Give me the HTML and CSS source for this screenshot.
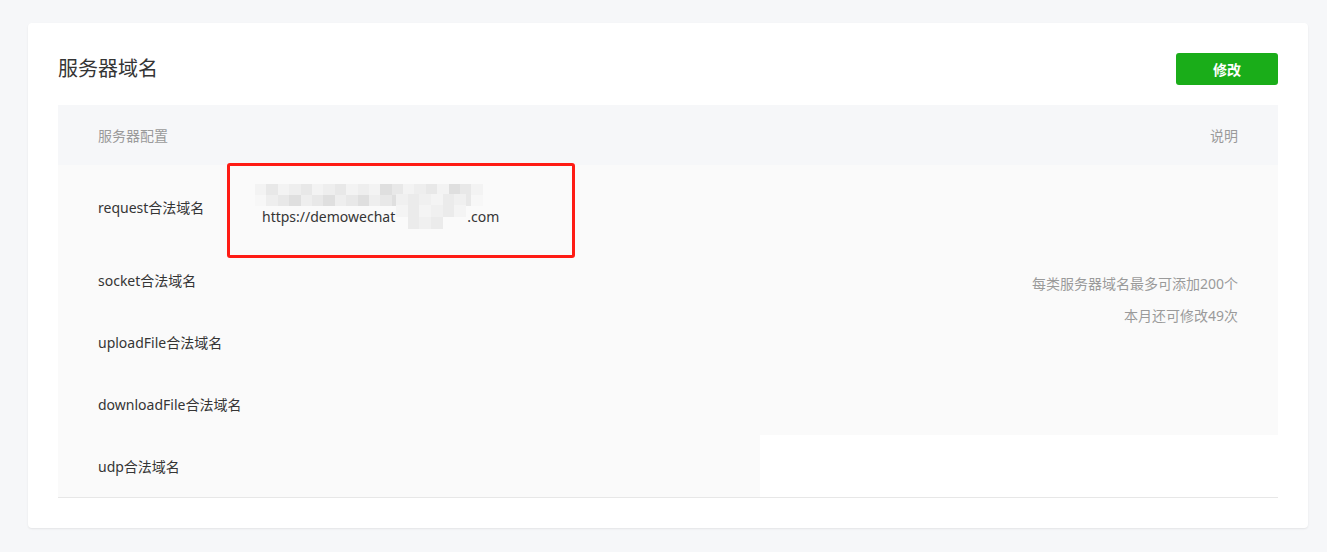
FILE: index.html
```html
<!DOCTYPE html>
<html lang="zh-CN">
<head>
<meta charset="utf-8">
<title>服务器域名</title>
<link rel="stylesheet" href="styles.css">
</head>
<body>
<div class="page">
  <section class="card">
    <div class="card-head">
      <h2 class="title">服务器域名</h2>
      <button class="btn-primary">修改</button>
    </div>
    <div class="table-wrap">
      <table class="domain-table">
        <thead>
          <tr>
            <th class="col-label">服务器配置</th>
            <th class="col-value"></th>
            <th class="col-desc">说明</th>
          </tr>
        </thead>
        <tbody>
          <tr class="row-tall">
            <td class="col-label">request合法域名</td>
            <td class="col-value">
              <div class="value-line">
                <div class="mosaic">
                  <i class="m1"></i><i class="m2"></i><i class="m1"></i><i class="m3"></i><i class="m2"></i><i class="m1"></i><i class="m3"></i><i class="m2"></i><i class="m1"></i><i class="m3"></i><i class="m1"></i><i class="m4"></i><i class="m2"></i><i class="m1"></i><i class="m3"></i><i class="m2"></i><i class="m1"></i><i class="m4"></i><i class="m2"></i><i class="m1"></i>
                  <i class="m5"></i><i class="m3"></i><i class="m2"></i><i class="m4"></i><i class="m3"></i><i class="m2"></i><i class="m4"></i><i class="m3"></i><i class="m2"></i><i class="m4"></i><i class="m3"></i><i class="m2"></i><i class="m4"></i><i class="m2"></i><i class="m3"></i><i class="m1"></i><i class="m2"></i><i class="m3"></i><i class="m2"></i><i class="m5"></i>
                </div>
              </div>
              <div class="value-line url-line">https://demowechat<span class="hidden-part">xxxxxxxxx</span>.com
                <div class="mosaic-over">
                  <i class="w1"></i><i class="w2"></i><i class="w1"></i><i class="w3"></i><i class="w2"></i><i class="w1"></i>
                  <i class="w3"></i><i class="w2"></i><i class="w3"></i><i class="w1"></i><i class="w2"></i><i class="w3"></i>
                  <i class="w5"></i><i class="w2"></i><i class="w1"></i><i class="w2"></i><i class="w5"></i><i class="w5"></i>
                </div>
              </div>
              <div class="highlight-box"></div>
            </td>
            <td class="col-desc" rowspan="4">
              <p class="desc-line">每类服务器域名最多可添加200个</p>
              <p class="desc-line">本月还可修改49次</p>
            </td>
          </tr>
          <tr>
            <td class="col-label">socket合法域名</td>
            <td class="col-value"></td>
          </tr>
          <tr>
            <td class="col-label">uploadFile合法域名</td>
            <td class="col-value"></td>
          </tr>
          <tr>
            <td class="col-label">downloadFile合法域名</td>
            <td class="col-value"></td>
          </tr>
          <tr>
            <td class="col-label">udp合法域名</td>
            <td class="col-value"></td>
          </tr>
        </tbody>
      </table>
    </div>
  </section>
</div>
</body>
</html>
```

FILE: styles.css
```css
* { box-sizing: border-box; }

html, body {
  margin: 0;
  padding: 0;
  background: #f6f7f9;
  font-family: "Noto Sans", "Noto Sans CJK SC", sans-serif;
  color: #353535;
  font-size: 14px;
}

.page {
  padding: 23px 19px 24px 28px;
}

.card {
  background: #fff;
  border-radius: 4px;
  box-shadow: 0 1px 2px rgba(0, 0, 0, 0.08);
  padding: 30px;
}

.card-head {
  display: flex;
  align-items: center;
  justify-content: space-between;
  height: 32px;
  margin-bottom: 20px;
}

.title {
  margin: 0;
  font-size: 20px;
  font-weight: 400;
  line-height: 32px;
  color: #353535;
}

.btn-primary {
  width: 102px;
  height: 32px;
  border: 0;
  border-radius: 3px;
  background: #1aad19;
  color: #fff;
  font-family: "Noto Sans", "Noto Sans CJK SC", sans-serif;
  font-size: 14px;
  font-weight: 700;
  padding: 0;
}

.table-wrap {
  border-bottom: 1px solid #e7e7e7;
}

.domain-table {
  width: 100%;
  border-collapse: collapse;
  border-spacing: 0;
  table-layout: fixed;
}

.domain-table th {
  background: #f6f7f9;
  height: 60px;
  font-weight: 400;
  color: #9a9a9a;
  text-align: left;
  padding: 0;
}

.domain-table td {
  background: #fafafa;
  height: 62px;
  padding: 0;
  vertical-align: middle;
}

.domain-table .row-tall td {
  height: 84px;
}

.col-label {
  width: 194px;
  padding-left: 40px !important;
  white-space: nowrap;
}

.col-value {
  width: 508px;
  padding-left: 10px !important;
  position: relative;
}

.domain-table th.col-desc,
.domain-table td.col-desc {
  text-align: right;
  padding-right: 40px !important;
  color: #9a9a9a;
}

.desc-line {
  margin: 0;
  line-height: 32px;
}

.value-line {
  height: 22px;
  line-height: 22px;
  white-space: nowrap;
}

.mosaic {
  display: grid;
  grid-template-columns: repeat(20, 11.4px);
  grid-auto-rows: 11px;
  margin-left: -7px;
  margin-top: -3px;
  width: 228px;
}

.mosaic i { display: block; }
.m1 { background: #f3f3f3; }
.m2 { background: #e8e8e8; }
.m3 { background: #eeeeee; }
.m4 { background: #dfdfdf; }
.m5 { background: #f7f7f7; }

.url-line {
  position: relative;
}

.hidden-part {
  color: transparent;
  display: inline-block;
  width: 72px;
  overflow: hidden;
  vertical-align: top;
}

.mosaic-over {
  position: absolute;
  left: 134px;
  top: -12px;
  width: 70px;
  height: 35px;
  display: grid;
  grid-template-columns: repeat(6, 1fr);
  grid-template-rows: repeat(3, 1fr);
}

.mosaic-over i { display: block; }
.w1 { background: #f0f0f0; }
.w2 { background: #ebebeb; }
.w3 { background: #f4f4f4; }
.w5 { background: #fafafa; }

.highlight-box {
  position: absolute;
  z-index: 2;
  left: -25px;
  top: -2px;
  width: 348px;
  height: 95px;
  border: 3px solid #fe1b14;
  border-radius: 3px;
  pointer-events: none;
}
```
